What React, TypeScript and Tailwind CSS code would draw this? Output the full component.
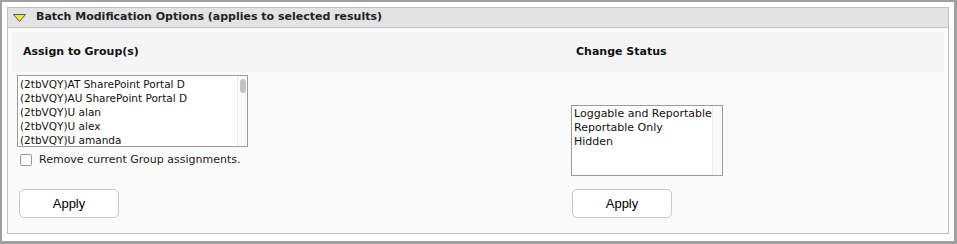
import * as React from "react";

const groups = [
  "(2tbVQY)AT SharePoint Portal D",
  "(2tbVQY)AU SharePoint Portal D",
  "(2tbVQY)U alan",
  "(2tbVQY)U alex",
  "(2tbVQY)U amanda",
];

const statuses = ["Loggable and Reportable", "Reportable Only", "Hidden"];

function ListBox({
  items,
  className,
  textClass,
  thumb,
}: {
  items: string[];
  className?: string;
  textClass?: string;
  thumb?: boolean;
}) {
  return (
    <div
      className={`relative overflow-hidden border border-[#9b9b9b] bg-white ${className ?? ""}`}
    >
      <ul className={`pl-[2px] pt-px leading-[14px] text-[#111] ${textClass ?? "text-[11px]"}`}>
        {items.map((item) => (
          <li key={item} className="whitespace-nowrap">
            {item}
          </li>
        ))}
      </ul>
      {/* scrollbar track */}
      <div className="absolute right-0 top-0 bottom-0 w-[10px] border-l border-[#ececec] bg-[#fafafa]">
        {thumb && (
          <div className="mx-auto mt-[3px] h-[14px] w-[6px] rounded-full bg-[#c2c2c2]" />
        )}
      </div>
    </div>
  );
}

function ApplyButton() {
  return (
    <button className="h-[29px] w-[100px] rounded-[5px] border border-[#c8c8c8] bg-white font-['Liberation_Sans',Arial,sans-serif] text-[13px] text-black">
      Apply
    </button>
  );
}

export default function App() {
  return (
    <div className="h-[244px] w-[957px] border-b-[3px] border-l-2 border-r-[3px] border-t-2 border-[#a0a0a0] bg-white pl-[5px] pr-[5px] pt-[5px] font-['Verdana','DejaVu_Sans',sans-serif]">
      <div className="h-[227px] border border-[#c0c0c0] bg-[#fafafa]">
        {/* Header */}
        <div className="flex h-[20px] items-center gap-[10px] border-b border-[#c0c0c0] bg-[#e3e3e3] pl-[5px]">
          <svg width="13" height="8" viewBox="0 0 13 8">
            <polygon
              points="0.5,0.5 12.5,0.5 6.5,7.5"
              fill="#f3e63c"
              stroke="#555"
              strokeWidth="1"
            />
          </svg>
          <span className="text-[11px] font-bold text-[#222]">
            Batch Modification Options (applies to selected results)
          </span>
        </div>

        {/* Body */}
        <div className="flex p-1">
          {/* Assign column */}
          <div className="flex w-[554px] flex-col">
            <div className="flex h-[40px] items-center bg-[#f5f5f5] pl-[11px] text-[11px] font-bold text-[#111]">
              Assign to Group(s)
            </div>
            <div className="h-[117px] pl-[5px] pt-[3px]">
              <ListBox
                items={groups}
                thumb
                textClass="text-[10.5px]"
                className="h-[72px] w-[231px]"
              />
              <label className="mt-[5px] flex items-center gap-[7px] pl-[3px] text-[11px] text-[#222]">
                <span className="h-[12px] w-[12px] rounded-[2px] border border-[#9a9a9a] bg-white" />
                Remove current Group assignments.
              </label>
            </div>
            <div className="pl-[7px]">
              <ApplyButton />
            </div>
          </div>

          {/* Status column */}
          <div className="flex flex-1 flex-col">
            <div className="flex h-[40px] items-center bg-[#f5f5f5] pl-[10px] text-[11px] font-bold text-[#111]">
              Change Status
            </div>
            <div className="h-[117px] pl-[5px] pt-[33px]">
              <ListBox items={statuses} className="h-[71px] w-[152px]" />
            </div>
            <div className="pl-[6px]">
              <ApplyButton />
            </div>
          </div>
        </div>
      </div>
    </div>
  );
}
